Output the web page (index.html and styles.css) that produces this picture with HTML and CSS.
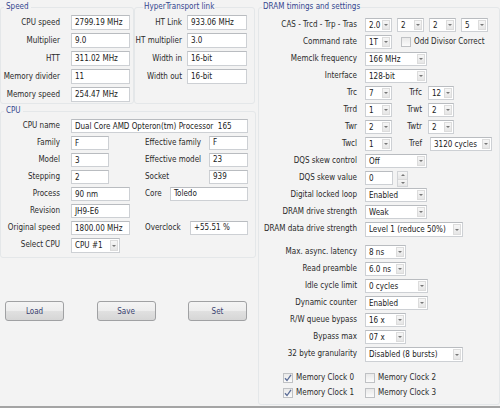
FILE: index.html
```html
<!DOCTYPE html>
<html>
<head>
<meta charset="utf-8">
<link rel="stylesheet" href="styles.css">
</head>
<body>
<div class="window">
  <div class="left">
    <div class="top-row">
      <fieldset class="group speed">
        <legend>Speed</legend>
        <div class="rows">
          <div class="row"><span class="lbl">CPU speed</span><span class="field w59">2799.19 MHz</span></div>
          <div class="row"><span class="lbl">Multiplier</span><span class="field w59">9.0</span></div>
          <div class="row"><span class="lbl">HTT</span><span class="field w59">311.02 MHz</span></div>
          <div class="row"><span class="lbl">Memory divider</span><span class="field w59">11</span></div>
          <div class="row"><span class="lbl">Memory speed</span><span class="field w59">254.47 MHz</span></div>
        </div>
      </fieldset>
      <fieldset class="group ht">
        <legend>HyperTransport link</legend>
        <div class="rows">
          <div class="row"><span class="lbl">HT Link</span><span class="field w60">933.06 MHz</span></div>
          <div class="row"><span class="lbl">HT multiplier</span><span class="field w60">3.0</span></div>
          <div class="row"><span class="lbl">Width in</span><span class="field w60">16-bit</span></div>
          <div class="row"><span class="lbl">Width out</span><span class="field w60">16-bit</span></div>
        </div>
      </fieldset>
    </div>

    <fieldset class="group cpu">
      <legend>CPU</legend>
      <div class="rows">
        <div class="row"><span class="lbl">CPU name</span><span class="field w177">Dual Core AMD Opteron(tm) Processor&nbsp; 165</span></div>
        <div class="row"><span class="lbl">Family</span><span class="cell"><span class="field w38">F</span></span><span class="right"><span class="rlbl">Effective family</span><span class="field w39">F</span></span></div>
        <div class="row"><span class="lbl">Model</span><span class="cell"><span class="field w38">3</span></span><span class="right"><span class="rlbl">Effective model</span><span class="field w39">23</span></span></div>
        <div class="row"><span class="lbl">Stepping</span><span class="cell"><span class="field w38">2</span></span><span class="right"><span class="rlbl">Socket</span><span class="field w39">939</span></span></div>
        <div class="row"><span class="lbl">Process</span><span class="cell"><span class="field w59">90 nm</span></span><span class="right"><span class="rlbl">Core</span><span class="field w78">Toledo</span></span></div>
        <div class="row"><span class="lbl">Revision</span><span class="cell"><span class="field w59">JH9-E6</span></span></div>
        <div class="row"><span class="lbl">Original speed</span><span class="cell"><span class="field w59">1800.00 MHz</span></span><span class="right"><span class="rlbl">Overclock</span><span class="field w58">+55.51 %</span></span></div>
        <div class="row"><span class="lbl">Select CPU</span><span class="cell"><span class="sel w49 tall"><span class="v">CPU #1</span><span class="arr"></span></span></span></div>
      </div>
    </fieldset>

    <div class="buttons">
      <span class="btn">Load</span>
      <span class="btn">Save</span>
      <span class="btn">Set</span>
    </div>
  </div>

  <fieldset class="group dram">
    <legend>DRAM timings and settings</legend>
    <div class="rows">
      <div class="row"><span class="lbl">CAS - Trcd - Trp - Tras</span>
        <span class="multi">
          <span class="sel w27"><span class="v">2.0</span><span class="arr"></span></span>
          <span class="sel w27"><span class="v">2</span><span class="arr"></span></span>
          <span class="sel w27"><span class="v">2</span><span class="arr"></span></span>
          <span class="sel w27"><span class="v">5</span><span class="arr"></span></span>
        </span>
      </div>
      <div class="row"><span class="lbl">Command rate</span>
        <span class="sel w27"><span class="v">1T</span><span class="arr"></span></span>
        <span class="check odd"><span class="box"></span>Odd Divisor Correct</span>
      </div>
      <div class="row"><span class="lbl">Memclk frequency</span><span class="sel w62"><span class="v">166 MHz</span><span class="arr"></span></span></div>
      <div class="row"><span class="lbl">Interface</span><span class="sel w62"><span class="v">128-bit</span><span class="arr"></span></span></div>
      <div class="row"><span class="lbl">Trc</span><span class="sel w27"><span class="v">7</span><span class="arr"></span></span><span class="lbl2">Trfc</span><span class="sel w26"><span class="v">12</span><span class="arr"></span></span></div>
      <div class="row"><span class="lbl">Trrd</span><span class="sel w27"><span class="v">1</span><span class="arr"></span></span><span class="lbl2">Trwt</span><span class="sel w26"><span class="v">2</span><span class="arr"></span></span></div>
      <div class="row"><span class="lbl">Twr</span><span class="sel w27"><span class="v">2</span><span class="arr"></span></span><span class="lbl2">Twtr</span><span class="sel w26"><span class="v">2</span><span class="arr"></span></span></div>
      <div class="row"><span class="lbl">Twcl</span><span class="sel w27"><span class="v">1</span><span class="arr"></span></span><span class="lbl2">Tref</span><span class="sel w62 tref"><span class="v">3120 cycles</span><span class="arr"></span></span></div>
      <div class="row"><span class="lbl">DQS skew control</span><span class="sel w62"><span class="v">Off</span><span class="arr"></span></span></div>
      <div class="row"><span class="lbl">DQS skew value</span><span class="field w28">0</span><span class="spin"><span class="up"></span><span class="dn"></span></span></div>
      <div class="row"><span class="lbl">Digital locked loop</span><span class="sel w62"><span class="v">Enabled</span><span class="arr"></span></span></div>
      <div class="row"><span class="lbl">DRAM drive strength</span><span class="sel w62"><span class="v">Weak</span><span class="arr"></span></span></div>
      <div class="row"><span class="lbl">DRAM data drive strength</span><span class="sel w98 tall"><span class="v">Level 1 (reduce 50%)</span><span class="arr"></span></span></div>
      <div class="row gap6"><span class="lbl">Max. async. latency</span><span class="sel w41"><span class="v">8 ns</span><span class="arr"></span></span></div>
      <div class="row"><span class="lbl">Read preamble</span><span class="sel w41"><span class="v">6.0 ns</span><span class="arr"></span></span></div>
      <div class="row"><span class="lbl">Idle cycle limit</span><span class="sel w63"><span class="v">0 cycles</span><span class="arr"></span></span></div>
      <div class="row"><span class="lbl">Dynamic counter</span><span class="sel w63"><span class="v">Enabled</span><span class="arr"></span></span></div>
      <div class="row"><span class="lbl">R/W queue bypass</span><span class="sel w41"><span class="v">16 x</span><span class="arr"></span></span></div>
      <div class="row"><span class="lbl">Bypass max</span><span class="sel w41"><span class="v">07 x</span><span class="arr"></span></span></div>
      <div class="row"><span class="lbl">32 byte granularity</span><span class="sel w98 tall"><span class="v">Disabled (8 bursts)</span><span class="arr"></span></span></div>
      <div class="crow first">
        <span class="check c1"><span class="box on"><svg width="8" height="8" viewBox="0 0 8 8"><path d="M1 4.2 L3 6.5 L7 0.8" fill="none" stroke="#5a6c96" stroke-width="1.3"/></svg></span>Memory Clock 0</span>
        <span class="check"><span class="box"></span>Memory Clock 2</span>
      </div>
      <div class="crow">
        <span class="check c1"><span class="box on"><svg width="8" height="8" viewBox="0 0 8 8"><path d="M1 4.2 L3 6.5 L7 0.8" fill="none" stroke="#5a6c96" stroke-width="1.3"/></svg></span>Memory Clock 1</span>
        <span class="check"><span class="box"></span>Memory Clock 3</span>
      </div>
    </div>
  </fieldset>
</div>
<div class="status"></div>
</body>
</html>
```

FILE: styles.css
```css
html, body {
  margin: 0;
  padding: 0;
}

body {
  width: 500px;
  height: 408px;
  overflow: hidden;
  background: #f3f3f3;
  font-family: "DejaVu Sans Condensed", "DejaVu Sans", sans-serif;
  font-stretch: condensed;
  font-size: 8px;
  color: #2a2a2a;
}

.window {
  display: grid;
  grid-template-columns: 258px 242px;
  height: 406px;
}

.status {
  height: 2px;
  background: #a4a4a4;
}

.left {
  display: flex;
  flex-direction: column;
}

.top-row {
  display: flex;
  height: 104px;
}

fieldset.group {
  margin: 0;
  padding: 0;
  border: 1px solid #e4e7e9;
  border-radius: 3px;
  min-width: 0;
  box-sizing: border-box;
}

legend {
  margin-left: 3px;
  padding: 0 2px;
  height: 14px;
  line-height: 14px;
  color: #34468f;
}

.rows {
  display: flex;
  flex-direction: column;
}

.row {
  display: flex;
  align-items: flex-start;
  flex: none;
}

.lbl {
  display: flex;
  justify-content: flex-end;
  white-space: nowrap;
  flex: none;
}

.field {
  box-sizing: border-box;
  display: flex;
  align-items: center;
  flex: none;
  background: #fff;
  border: 1px solid #cdd0d4;
  border-top-color: #b9bcc0;
  padding-left: 3px;
  white-space: nowrap;
  overflow: hidden;
  color: #1a1a1a;
}

/* Speed group */
.speed {
  width: 134px;
  height: 104px;
}
.speed .rows,
.ht .rows {
  padding-top: 1px;
}
.speed .row,
.ht .row {
  height: 18px;
}
.speed .field,
.ht .field {
  height: 15px;
}
.speed .lbl {
  width: 59px;
  margin-right: 11px;
  line-height: 15px;
}

/* HyperTransport group */
.ht {
  width: 121px;
  height: 104px;
  margin-left: 1px;
}
.ht legend {
  margin-left: 8px;
  padding: 0 1px;
}
.ht .lbl {
  width: 47px;
  margin-right: 5px;
  line-height: 15px;
}

/* CPU group */
.cpu {
  width: 256px;
  height: 154px;
}
.cpu .rows {
  padding-top: 1px;
}
.cpu .row {
  height: 17px;
}
.cpu .field {
  height: 14px;
}
.cpu .lbl {
  width: 59px;
  margin-right: 11px;
  line-height: 14px;
}
.cpu .cell {
  width: 74px;
  flex: none;
  display: flex;
}
.cpu .right {
  width: 103px;
  display: flex;
  justify-content: space-between;
  line-height: 14px;
}
.rlbl {
  white-space: nowrap;
}

/* widths */
.w26 { width: 26px; }
.w27 { width: 27px; }
.w28 { width: 28px; }
.w38 { width: 38px; }
.w39 { width: 39px; }
.w41 { width: 41px; }
.w49 { width: 49px; }
.w58 { width: 58px; }
.w59 { width: 59px; }
.w60 { width: 60px; }
.w62 { width: 62px; }
.w63 { width: 63px; }
.w78 { width: 78px; }
.w98 { width: 98px; }
.w177 { width: 177px; }

/* select / combo */
.sel {
  box-sizing: border-box;
  display: flex;
  flex: none;
  height: 14px;
  background: #fff;
  border: 1px solid #cdd0d4;
  border-top-color: #b9bcc0;
  color: #1a1a1a;
}
.sel.tall {
  height: 15px;
}
.sel .v {
  flex: 1;
  min-width: 0;
  padding-left: 3px;
  white-space: nowrap;
  overflow: hidden;
  display: flex;
  align-items: center;
}
.sel .arr {
  flex: none;
  width: 8px;
  margin: 1px;
  box-sizing: border-box;
  border: 1px solid #dcdcdc;
  background: linear-gradient(#f6f6f6, #e6e6e6);
  display: flex;
  align-items: center;
  justify-content: center;
}
.sel .arr::after {
  content: "";
  border-left: 2px solid transparent;
  border-right: 2px solid transparent;
  border-top: 2px solid #777;
}

/* Buttons */
.buttons {
  display: flex;
  justify-content: space-between;
  padding: 0 11px 0 5px;
  margin-top: 43px;
}
.btn {
  box-sizing: border-box;
  width: 59px;
  height: 20px;
  border: 1px solid #a0a1a3;
  border-radius: 3px;
  background: linear-gradient(#f4f4f4 0%, #ededed 48%, #e0e0e0 52%, #d6d6d6 100%);
  color: #3a4270;
  display: flex;
  align-items: center;
  justify-content: center;
}

/* DRAM group */
.dram {
  width: 242px;
  height: 405px;
}
.dram legend {
  margin-left: 3px;
  padding: 0 1px;
}
.dram .rows {
  padding-top: 4px;
}
.dram .row {
  height: 17px;
}
.dram .row.gap6 {
  margin-top: 6px;
}
.dram .lbl {
  width: 98px;
  margin-right: 8px;
  line-height: 14px;
}
.dram .field {
  height: 14px;
}
.multi {
  display: flex;
  gap: 5px;
}
.lbl2 {
  width: 30px;
  margin-right: 6px;
  text-align: right;
  line-height: 14px;
  flex: none;
}
.sel.tref {
  margin-left: 2px;
}

.check {
  display: flex;
  align-items: center;
  white-space: nowrap;
  line-height: 14px;
}
.check .box {
  box-sizing: border-box;
  width: 10px;
  height: 10px;
  margin-right: 3px;
  border: 1px solid #bfc1c4;
  background: linear-gradient(#e9e9e9, #fbfbfb);
  display: flex;
  align-items: center;
  justify-content: center;
  flex: none;
}
.check.odd {
  margin-left: 9px;
}

.spin {
  box-sizing: border-box;
  width: 11px;
  height: 16px;
  margin-left: 4px;
  border: 1px solid #d2d4d7;
  display: flex;
  flex-direction: column;
  flex: none;
}
.spin .up,
.spin .dn {
  flex: 1;
  display: flex;
  align-items: center;
  justify-content: center;
  background: linear-gradient(#f6f6f6, #e6e6e6);
}
.spin .up {
  border-bottom: 1px solid #dadada;
}
.spin .up::after {
  content: "";
  border-left: 2px solid transparent;
  border-right: 2px solid transparent;
  border-bottom: 2px solid #777;
}
.spin .dn::after {
  content: "";
  border-left: 2px solid transparent;
  border-right: 2px solid transparent;
  border-top: 2px solid #777;
}

.crow {
  display: flex;
  height: 15px;
  padding-left: 24px;
  align-items: center;
}
.crow.first {
  margin-top: 6px;
}
.crow .c1 {
  width: 82px;
  flex: none;
}
```
